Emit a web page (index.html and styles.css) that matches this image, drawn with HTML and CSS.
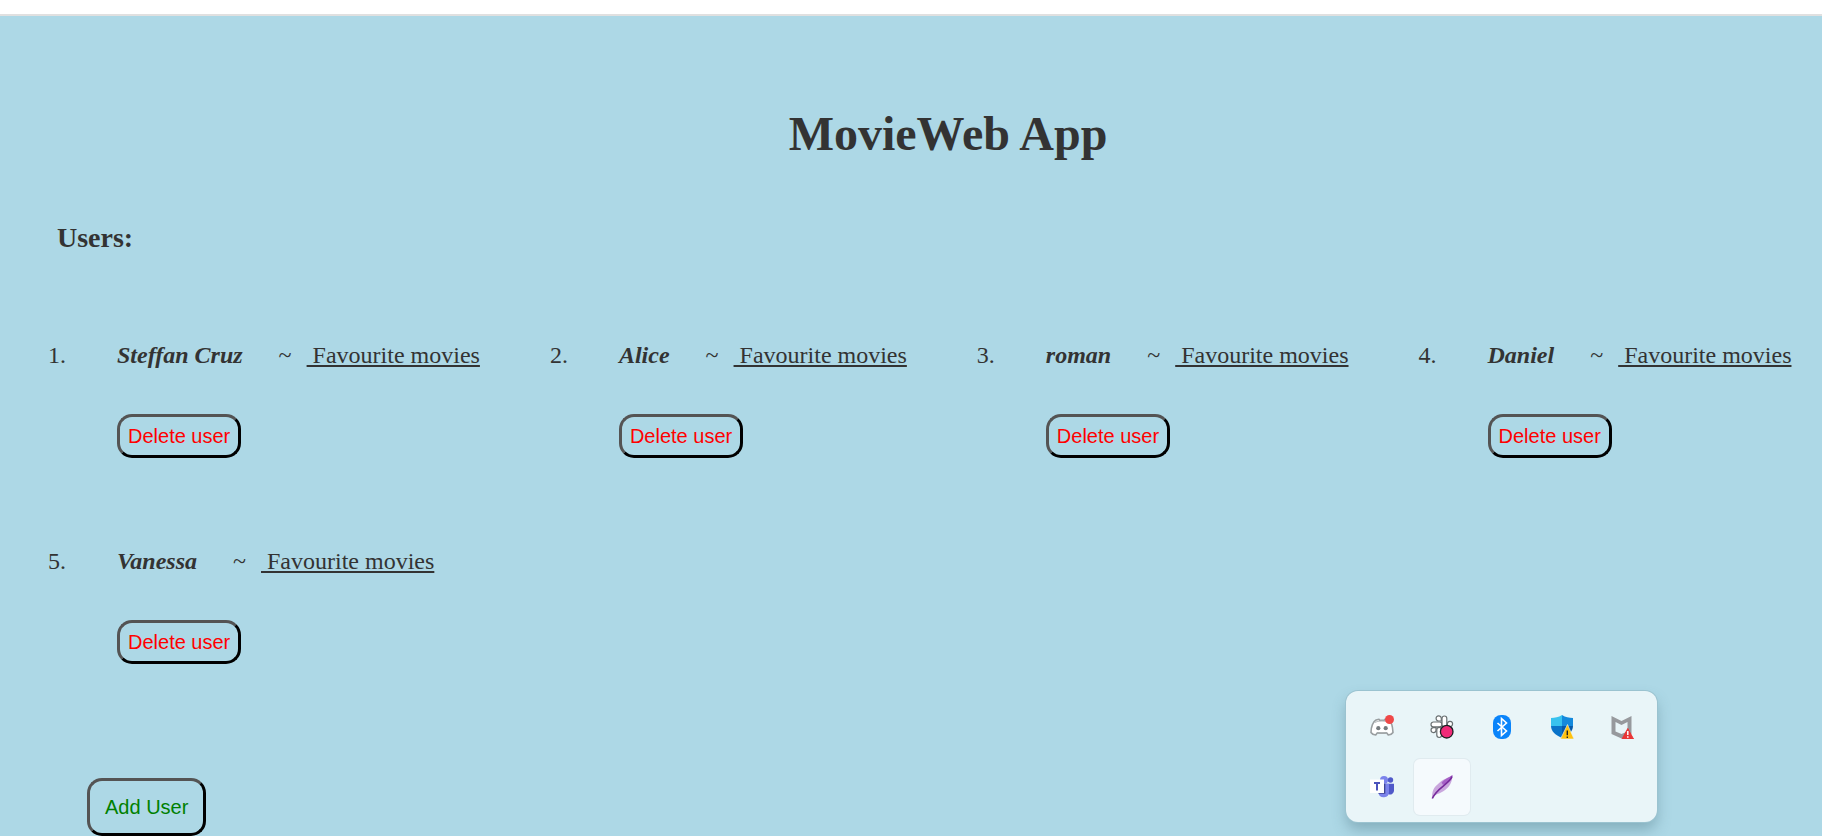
FILE: index.html
```html
<!DOCTYPE html>
<html lang="en">
<head>
<meta charset="utf-8">
<title>MovieWeb App</title>
<link rel="stylesheet" href="styles.css">
</head>
<body>
<div class="topbar"></div>
<main class="page">
  <h1 class="title">MovieWeb App</h1>
  <h2 class="subtitle">Users:</h2>
  <ol class="users">
    <li class="user">
      <div class="user-line"><strong class="name">Steffan Cruz</strong><span class="tilde">~</span><a class="movies" href="#steffan">&nbsp;Favourite movies</a></div>
      <button class="btn delete" type="button">Delete user</button>
    </li>
    <li class="user">
      <div class="user-line"><strong class="name">Alice</strong><span class="tilde">~</span><a class="movies" href="#alice">&nbsp;Favourite movies</a></div>
      <button class="btn delete" type="button">Delete user</button>
    </li>
    <li class="user">
      <div class="user-line"><strong class="name">roman</strong><span class="tilde">~</span><a class="movies" href="#roman">&nbsp;Favourite movies</a></div>
      <button class="btn delete" type="button">Delete user</button>
    </li>
    <li class="user">
      <div class="user-line"><strong class="name">Daniel</strong><span class="tilde">~</span><a class="movies" href="#daniel">&nbsp;Favourite movies</a></div>
      <button class="btn delete" type="button">Delete user</button>
    </li>
    <li class="user">
      <div class="user-line"><strong class="name">Vanessa</strong><span class="tilde">~</span><a class="movies" href="#vanessa">&nbsp;Favourite movies</a></div>
      <button class="btn delete" type="button">Delete user</button>
    </li>
  </ol>
  <button class="btn add" type="button">Add User</button>
</main>

<aside class="tray" aria-label="System tray">
  <button class="tray-item" type="button" aria-label="Discord">
    <svg width="24" height="24" viewBox="0 0 24 24">
      <path d="M6 5 9 4.300l.7 1h4.600l.7-1L18 5c2.500 1 4.700 6 5 12.500-1 1.500-2.700 2.300-4.700 2.500l-1.500-2H7.200l-1.500 2c-2-.2-3.700-1-4.700-2.500C1 12 3 6.500 6 5Z" fill="#fff" stroke="#999ea0" stroke-width="1.600" stroke-linejoin="round"/>
      <path d="M4.500 7.500c4-2 11-2 15 0" fill="none" stroke="#b3b8ba" stroke-width="1.200"/>
      <circle cx="8.300" cy="13.200" r="2.100" fill="#767c7f"/><circle cx="15.700" cy="13.200" r="2.100" fill="#767c7f"/>
      <path d="M7 17.600c3 1 7 1 10 0" fill="none" stroke="#a3a8aa" stroke-width="1.200"/>
      <circle cx="19.500" cy="4.500" r="4.500" fill="#ef4848"/>
    </svg>
  </button>
  <button class="tray-item" type="button" aria-label="Slack">
    <svg width="24" height="24" viewBox="0 0 24 24">
      <g fill="#fff" stroke="#696f71" stroke-width="1.200">
        <path d="M11.300 6H9a2.600 2.600 0 1 1 2.300-2.600Z"/>
        <rect x="1" y="7" width="11" height="4.800" rx="2.400"/>
        <rect x="12" y="1" width="4.800" height="10.800" rx="2.400"/>
        <path d="M17.400 11.500V8.600a2.600 2.600 0 1 1 2.600 2.900Z"/>
        <path d="M6 12.600v2.800a2.500 2.500 0 1 1-2.600-2.800Z"/>
        <rect x="6.800" y="12.300" width="4.800" height="10.200" rx="2.400"/>
        <rect x="12" y="12.300" width="10.500" height="4.800" rx="2.400"/>
      </g>
      <circle cx="16.700" cy="16.700" r="6.300" fill="#f02b78" stroke="#1b2022" stroke-width="1.300"/>
    </svg>
  </button>
  <button class="tray-item" type="button" aria-label="Bluetooth">
    <svg width="24" height="24" viewBox="0 0 24 24">
      <rect x="3" width="18" height="24" rx="8" fill="#0a84fa"/>
      <path d="m7.500 8 9 8-5 4.500v-17l5 4.500-9 8" fill="none" stroke="#fff" stroke-width="1.600"/>
    </svg>
  </button>
  <button class="tray-item" type="button" aria-label="Windows Security">
    <svg width="24" height="24" viewBox="0 0 24 24">
      <path d="M12 0C8.500 2.200 5 3 1 3v8h11Z" fill="#38c2ef"/>
      <path d="M12 0c3.500 2.200 7 3 11 3v8H12Z" fill="#1589dc"/>
      <path d="M1 11h11v12C5 20 1 16 1 11Z" fill="#0a73c9"/>
      <path d="M23 11H12v12c7-3 11-7 11-12Z" fill="#0859a8"/>
      <path d="M17.500 9.500 24 24H10.500Z" fill="#ffc20e" stroke="#eaf5f8" stroke-width=".6"/>
      <path d="M17.300 15.500v4.800m0 1.200V23" stroke="#222" stroke-width="1.400"/>
    </svg>
  </button>
  <button class="tray-item" type="button" aria-label="McAfee">
    <svg width="24" height="24" viewBox="0 0 24 24">
      <path d="m1.500 1 10 5 10-5v18l-10 4.500-10-4.500Zm4 6v9.500l6 2.500 6-2.500V7l-6 3Z" fill="#97999d" fill-rule="evenodd"/>
      <path d="M17.800 13.500 23.500 24h-11.500Z" fill="#e93636" stroke="#e93636" stroke-linejoin="round"/>
      <path d="M17.800 16v4m0 1.200v1.500" stroke="#fff" stroke-width="1.500"/>
    </svg>
  </button>
  <button class="tray-item" type="button" aria-label="Teams">
    <svg width="24" height="24" viewBox="0 0 24 24">
      <circle cx="14" cy="5" r="4" fill="#7b83eb"/><circle cx="20.500" cy="5" r="2.700" fill="#5059c9"/>
      <path d="M16 8.800h8v7.200a4 4 0 0 1-6 3Z" fill="#5059c9"/>
      <path d="M8.500 8.800H19V17a5.300 5.300 0 0 1-10.500 1Z" fill="#7b83eb"/>
      <path d="M13 8.800h2.300v10H8.500v-2Z" fill="#3f4594"/>
      <rect y="4.500" width="14" height="13.500" fill="#fff"/>
      <path d="M4 8h6M7 8v7.500" stroke="#4b53bc" stroke-width="2"/>
    </svg>
  </button>
  <button class="tray-item active" type="button" aria-label="Feather">
    <svg width="24" height="24" viewBox="0 0 24 24">
      <path d="M22.500 0C19 3 12.500 4 7.500 9.500 3.500 13 2 16 2 23.500 4 20 7 19.500 11 17.500 17.500 14 22 10 22.500 0Z" fill="#c9a6dd"/>
      <path d="M22.500 0C19 2.500 15 3.500 11.500 7.500L13 10C18 7.500 22 6 22.500 0Z" fill="#a661c6"/>
      <path d="M22 1.500C19.500 9 7 12.500 2.300 23.500" fill="none" stroke="#762a9b" stroke-width="1.600"/>
    </svg>
  </button>
</aside>
</body>
</html>
```
FILE: styles.css
```css
body {
  margin: 0;
  background: #add8e6;
  color: #333;
  font-family: "Liberation Serif", "Times New Roman", serif;
  font-size: 24px;
  line-height: 28px;
}

.topbar {
  height: 14px;
  background: #fff;
  border-bottom: 2px solid #e0e0e0;
}

.page {
  padding-top: 90px;
}

.title {
  margin: 0;
  padding-left: 74px;
  font-size: 48px;
  line-height: 56px;
  text-align: center;
}

.subtitle {
  margin: 60px 0 0 57px;
  font-size: 28px;
  line-height: 32px;
}

.users {
  display: flex;
  flex-wrap: wrap;
  gap: 89px 94px;
  margin: 87px 0 0;
  padding: 0 0 0 72px;
}

.user {
  padding-left: 45px;
}

.user-line {
  display: flex;
  margin-bottom: 45px;
  white-space: nowrap;
}

.name {
  font-style: italic;
}

.tilde {
  margin: 0 15px 0 36px;
}

.movies {
  color: inherit;
  text-decoration: underline;
}

.btn {
  display: block;
  background: transparent;
  border: 3px outset #000;
  border-radius: 15px;
  font-family: "Liberation Sans", Arial, sans-serif;
  font-size: 20px;
  line-height: 22px;
}

.delete {
  padding: 8px;
  color: #f00;
}

.add {
  margin: 114px 0 0 87px;
  padding: 15px;
  color: #008000;
}

.tray {
  position: fixed;
  right: 165px;
  bottom: 14px;
  display: grid;
  grid-template-columns: repeat(5, 56px);
  gap: 4px;
  padding: 8px 7px 7px 8px;
  border-radius: 12px;
  background: #e9f5f8;
  box-shadow: 0 0 0 1px #9bc3d0, 0 8px 14px rgba(60, 100, 115, 0.35);
}

.tray-item {
  display: grid;
  place-items: center;
  height: 56px;
  padding: 0;
  border: 0;
  border-radius: 6px;
  background: transparent;
}

.active {
  background: #f5fafd;
  box-shadow: 0 0 0 1px #e0ebef;
}
```
